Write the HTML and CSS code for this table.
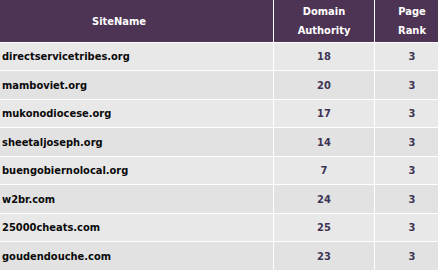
FILE: index.html
```html
<!DOCTYPE html>
<html>
<head>
<meta charset="utf-8">
<link rel="stylesheet" href="styles.css">
</head>
<body>
<table class="rank-table">
  <thead>
    <tr>
      <th class="col-site">SiteName</th>
      <th class="col-da">Domain<br>Authority</th>
      <th class="col-pr">Page<br>Rank</th>
    </tr>
  </thead>
  <tbody>
    <tr class="odd"><td class="site">directservicetribes.org</td><td class="num">18</td><td class="num pr">3</td></tr>
    <tr class="even"><td class="site">mamboviet.org</td><td class="num">20</td><td class="num pr">3</td></tr>
    <tr class="odd"><td class="site">mukonodiocese.org</td><td class="num">17</td><td class="num pr">3</td></tr>
    <tr class="even"><td class="site">sheetaljoseph.org</td><td class="num">14</td><td class="num pr">3</td></tr>
    <tr class="odd"><td class="site">buengobiernolocal.org</td><td class="num">7</td><td class="num pr">3</td></tr>
    <tr class="even"><td class="site">w2br.com</td><td class="num">24</td><td class="num pr">3</td></tr>
    <tr class="odd"><td class="site">25000cheats.com</td><td class="num">25</td><td class="num pr">3</td></tr>
    <tr class="even"><td class="site">goudendouche.com</td><td class="num">23</td><td class="num pr">3</td></tr>
  </tbody>
</table>
</body>
</html>
```
FILE: styles.css
```css
html, body {
  margin: 0;
  padding: 0;
  background: #ffffff;
}
.rank-table {
  width: 438px;
  border-collapse: separate;
  border-spacing: 0;
  table-layout: fixed;
  font-family: "DejaVu Sans Condensed", "DejaVu Sans", sans-serif;
  font-weight: bold;
  font-size: 11px;
}
.rank-table th,
.rank-table td {
  padding: 0;
  border-right: 1px solid #ffffff;
  border-bottom: 1px solid #ffffff;
}
.rank-table th:last-child,
.rank-table td:last-child {
  border-right: 0;
}
.rank-table th {
  background: #4e3454;
  color: #ffffff;
  height: 42px;
  line-height: 19px;
  text-align: center;
}
.col-site { width: 274px; padding-right: 35px !important; box-sizing: border-box; }
.col-da { width: 100px; }
.col-pr { padding-left: 11px !important; }
.rank-table td {
  color: #0a0a0a;
}
.odd td { background: #e8e8e8; height: 27px; }
.even td { background: #e2e2e2; height: 28px; }
.site { padding-left: 2px !important; text-align: left; }
.num { text-align: center; color: #3e3454 !important; }
.pr { padding-left: 11px !important; }
```
